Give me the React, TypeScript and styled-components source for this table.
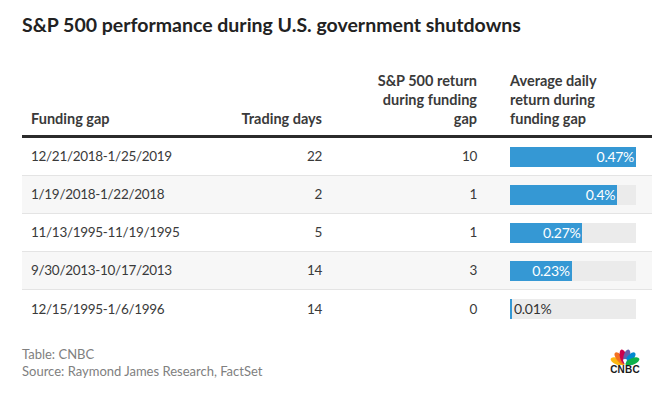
import React from 'react';
import styled, { createGlobalStyle } from 'styled-components';

type Row = {
  gap: string;
  days: number;
  ret: number;
  avg: number;
  label: string;
};

const rows: Row[] = [
  { gap: '12/21/2018-1/25/2019', days: 22, ret: 10, avg: 0.47, label: '0.47%' },
  { gap: '1/19/2018-1/22/2018', days: 2, ret: 1, avg: 0.4, label: '0.4%' },
  { gap: '11/13/1995-11/19/1995', days: 5, ret: 1, avg: 0.27, label: '0.27%' },
  { gap: '9/30/2013-10/17/2013', days: 14, ret: 3, avg: 0.23, label: '0.23%' },
  { gap: '12/15/1995-1/6/1996', days: 14, ret: 0, avg: 0.01, label: '0.01%' },
];

const MAX_AVG = 0.47;

const GlobalStyle = createGlobalStyle`
  html, body {
    margin: 0;
    background: #ffffff;
  }
  body {
    font-family: Lato, "Open Sans", "Liberation Sans", sans-serif;
    color: #333333;
  }
`;

const StDivPage = styled.div`
  width: 664px;
  height: 401px;
  box-sizing: border-box;
  padding: 13px 12px 0 22px;
`;

const StH1Title = styled.h1`
  margin: 0;
  font-size: 19.5px;
  line-height: 24px;
  font-weight: 700;
  color: #222222;
`;

const StDivTable = styled.div`
  margin-top: 34px;
`;

const StDivRow = styled.div<{ $head?: boolean; $shaded?: boolean; $last?: boolean }>`
  display: grid;
  grid-template-columns: minmax(0, 1fr) 150px 155px 166px;
  align-items: ${({ $head }) => ($head ? 'end' : 'center')};
  height: ${({ $head }) => ($head ? 'auto' : '38px')};
  box-sizing: border-box;
  background: ${({ $shaded }) => ($shaded ? '#f7f7f7' : 'transparent')};
  border-bottom: ${({ $head, $last }) =>
    $head ? '3px solid #2b2b2b' : $last ? 'none' : '1px solid #e4e4e4'};
  padding-bottom: ${({ $head }) => ($head ? '7px' : '0')};
`;

const StDivCell = styled.div<{ $align?: 'left' | 'right'; $bar?: boolean }>`
  text-align: ${({ $align }) => $align ?? 'left'};
  padding: ${({ $bar }) => ($bar ? '0 16px 0 24px' : '0 9px')};
  font-size: 13.5px;
  letter-spacing: -0.3px;
  line-height: 19px;
  white-space: nowrap;
  color: #3a3a3a;
`;

const StDivHeadCell = styled(StDivCell)`
  font-size: 14.5px;
  letter-spacing: 0;
  font-weight: 700;
  color: #3a3a3a;
`;

const StDivTrack = styled.div`
  position: relative;
  height: 20px;
  background: #ebebeb;
`;

const StDivFill = styled.div`
  height: 100%;
  background: #3598d4;
  display: flex;
  align-items: center;
  justify-content: flex-end;
  box-sizing: border-box;
  padding-right: 2px;
  min-width: 2px;
`;

const StSpanBarLabel = styled.span<{ $outside?: boolean }>`
  font-size: 14px;
  line-height: 20px;
  color: ${({ $outside }) => ($outside ? '#333333' : '#ffffff')};
  white-space: nowrap;
`;

const StSpanOutsideLabel = styled(StSpanBarLabel)`
  position: absolute;
  left: 4px;
  top: 0;
`;

const StDivFooter = styled.div`
  margin-top: 18px;
  display: flex;
  justify-content: space-between;
  align-items: flex-start;
  padding-right: 10px;
`;

const StDivNotes = styled.div`
  font-size: 13px;
  line-height: 17px;
  color: #808080;
`;

const StDivLogo = styled.div`
  display: flex;
  flex-direction: column;
  align-items: center;
  margin-top: 2px;
`;

const StSpanLogoText = styled.span`
  font-family: "Liberation Sans", Arial, sans-serif;
  font-weight: 700;
  font-size: 10px;
  line-height: 10px;
  letter-spacing: 0.2px;
  color: #1a1a1a;
`;

const Peacock: React.FC = () => {
  const feathers = [
    { c: '#fcb711', a: -68 },
    { c: '#f37021', a: -40 },
    { c: '#cc004c', a: -13 },
    { c: '#6460aa', a: 13 },
    { c: '#0089d0', a: 40 },
    { c: '#0db14b', a: 68 },
  ];
  return (
    <svg width="34" height="17" viewBox="0 0 30 16">
      {feathers.map((f) => (
        <ellipse
          key={f.c}
          cx="15"
          cy="8"
          rx="3.1"
          ry="7"
          fill={f.c}
          transform={`rotate(${f.a} 15 15.5)`}
        />
      ))}
      <path d="M15 16 L13 11 Q15 9.5 17 11 Z" fill="#ffffff" />
    </svg>
  );
};

const App: React.FC = () => {
  return (
    <StDivPage>
      <GlobalStyle />
      <StH1Title>S&amp;P 500 performance during U.S. government shutdowns</StH1Title>
      <StDivTable>
        <StDivRow $head>
          <StDivHeadCell>Funding gap</StDivHeadCell>
          <StDivHeadCell $align="right">Trading days</StDivHeadCell>
          <StDivHeadCell $align="right">
            S&amp;P 500 return
            <br />
            during funding
            <br />
            gap
          </StDivHeadCell>
          <StDivHeadCell $bar>
            Average daily
            <br />
            return during
            <br />
            funding gap
          </StDivHeadCell>
        </StDivRow>
        {rows.map((row, index) => {
          const pct = (row.avg / MAX_AVG) * 100;
          const tiny = pct < 10;
          return (
            <StDivRow key={row.gap} $shaded={index % 2 === 1} $last={index === rows.length - 1}>
              <StDivCell>{row.gap}</StDivCell>
              <StDivCell $align="right">{row.days}</StDivCell>
              <StDivCell $align="right">{row.ret}</StDivCell>
              <StDivCell $bar>
                <StDivTrack>
                  <StDivFill style={{ width: tiny ? '2px' : `${pct}%` }}>
                    {!tiny && <StSpanBarLabel>{row.label}</StSpanBarLabel>}
                  </StDivFill>
                  {tiny && <StSpanOutsideLabel $outside>{row.label}</StSpanOutsideLabel>}
                </StDivTrack>
              </StDivCell>
            </StDivRow>
          );
        })}
      </StDivTable>
      <StDivFooter>
        <StDivNotes>
          Table: CNBC
          <br />
          Source: Raymond James Research, FactSet
        </StDivNotes>
        <StDivLogo>
          <Peacock />
          <StSpanLogoText>CNBC</StSpanLogoText>
        </StDivLogo>
      </StDivFooter>
    </StDivPage>
  );
};

export default App;
